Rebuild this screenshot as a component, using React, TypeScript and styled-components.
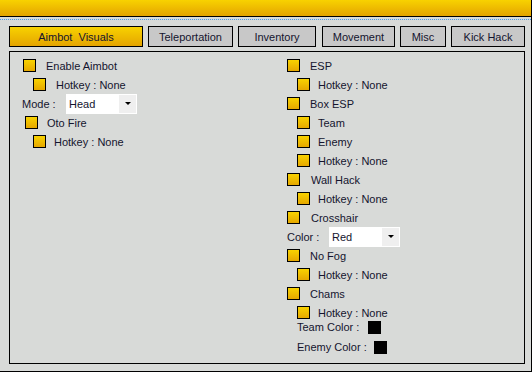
import React from "react";
import styled, { createGlobalStyle } from "styled-components";

const Global = createGlobalStyle`
  html, body { margin: 0; padding: 0; background: #d8dad8; overflow: hidden; }
  body { font-family: "Liberation Sans", Arial, sans-serif; font-size: 11px; color: #14142e; }
`;

const Window = styled.div`
  width: 531px;
  height: 371px;
  border-right: 1px solid #000;
  border-bottom: 1px solid #000;
  background: #d8dad8;
  display: flex;
  flex-direction: column;
`;

const Header = styled.div`
  height: 16px;
  background: linear-gradient(#f8d200, #e4a400);
  border-bottom: 1px solid #000;
`;

const Divider = styled.div`
  margin-top: 2px;
  border-top: 1px dotted #4a9ae8;
`;

const TabBar = styled.div`
  display: flex;
  margin: 6px 0 0 9px;
  height: 21px;
`;

const Tab = styled.div<{ $w: number; $active?: boolean; $ml?: number }>`
  box-sizing: border-box;
  width: ${(p) => p.$w}px;
  margin-left: ${(p) => p.$ml ?? 0}px;
  height: 21px;
  border: 1px solid #000;
  background: ${(p) => (p.$active ? "linear-gradient(#f8d200, #e4a400)" : "#c8c8c8")};
  display: flex;
  align-items: center;
  justify-content: center;
  font-size: 11px;
  color: #14142e;
  white-space: pre;
`;

const Panel = styled.div`
  box-sizing: border-box;
  margin: 4px 0 0 9px;
  width: 516px;
  height: 313px;
  border: 1px solid #000;
  padding: 4px 0 0 12px;
  display: grid;
  grid-template-columns: 265px 1fr;
  align-items: start;
`;

const Column = styled.div`
  display: flex;
  flex-direction: column;
`;

const Row = styled.div<{ $indent?: number; $h?: number; $mt?: number }>`
  display: flex;
  align-items: center;
  height: ${(p) => p.$h ?? 19}px;
  margin-top: ${(p) => p.$mt ?? 0}px;
  padding-left: ${(p) => p.$indent ?? 0}px;
  white-space: nowrap;
`;

const Check = styled.span<{ $gap?: number }>`
  box-sizing: border-box;
  width: 13px;
  height: 13px;
  border: 1px solid #000;
  background: linear-gradient(#f8d200, #e6a800);
  margin-right: ${(p) => p.$gap ?? 10}px;
  flex: none;
`;

const Label = styled.span<{ $w?: number }>`
  display: inline-block;
  width: ${(p) => (p.$w ? `${p.$w}px` : "auto")};
`;

const Select = styled.div`
  width: 71px;
  height: 20px;
  background: #fff;
  display: flex;
  align-items: stretch;
  box-sizing: border-box;
`;

const SelectText = styled.span`
  flex: 1;
  display: flex;
  align-items: center;
  padding-left: 3px;
`;

const SelectArrow = styled.span`
  width: 17px;
  margin: 1px 1px 1px 0;
  background: #efefef;
  display: flex;
  align-items: center;
  justify-content: center;
  &::after {
    content: "";
    border-left: 3px solid transparent;
    border-right: 3px solid transparent;
    border-top: 3px solid #000;
  }
`;

const Swatch = styled.span`
  width: 13px;
  height: 13px;
  background: #000;
  flex: none;
`;

const CheckRow = ({ label, indent, gap }: { label: string; indent: number; gap?: number }) => (
  <Row $indent={indent}>
    <Check $gap={gap} />
    <span>{label}</span>
  </Row>
);

const Dropdown = ({ value }: { value: string }) => (
  <Select>
    <SelectText>{value}</SelectText>
    <SelectArrow />
  </Select>
);

export default function App() {
  return (
    <>
      <Global />
      <Window>
        <Header />
        <Divider />
        <TabBar>
          <Tab $w={134} $active>{"Aimbot  Visuals"}</Tab>
          <Tab $w={85} $ml={5}>Teleportation</Tab>
          <Tab $w={78} $ml={5}>Inventory</Tab>
          <Tab $w={73} $ml={6}>Movement</Tab>
          <Tab $w={46} $ml={5}>Misc</Tab>
          <Tab $w={74} $ml={5}>Kick Hack</Tab>
        </TabBar>
        <Panel>
          <Column>
            <CheckRow label="Enable Aimbot" indent={1} />
            <CheckRow label="Hotkey : None" indent={11} />
            <Row>
              <Label $w={44}>Mode :</Label>
              <Dropdown value="Head" />
            </Row>
            <CheckRow label="Oto Fire" indent={3} gap={9} />
            <CheckRow label="Hotkey : None" indent={11} gap={8} />
          </Column>
          <Column>
            <CheckRow label="ESP" indent={0} />
            <CheckRow label="Hotkey : None" indent={10} gap={8} />
            <CheckRow label="Box ESP" indent={0} />
            <CheckRow label="Team" indent={10} gap={8} />
            <CheckRow label="Enemy" indent={10} gap={8} />
            <CheckRow label="Hotkey : None" indent={10} gap={8} />
            <CheckRow label="Wall Hack" indent={0} gap={11} />
            <CheckRow label="Hotkey : None" indent={10} gap={8} />
            <CheckRow label="Crosshair" indent={0} gap={11} />
            <Row>
              <Label $w={42}>Color :</Label>
              <Dropdown value="Red" />
            </Row>
            <CheckRow label="No Fog" indent={0} gap={10} />
            <CheckRow label="Hotkey : None" indent={10} gap={8} />
            <CheckRow label="Chams" indent={0} gap={10} />
            <CheckRow label="Hotkey : None" indent={10} gap={8} />
            <Row $indent={10} $h={14} $mt={-2}>
              <Label $w={71}>Team Color :</Label>
              <Swatch />
            </Row>
            <Row $indent={10} $h={14} $mt={6}>
              <Label $w={77}>Enemy Color :</Label>
              <Swatch />
            </Row>
          </Column>
        </Panel>
      </Window>
    </>
  );
}
